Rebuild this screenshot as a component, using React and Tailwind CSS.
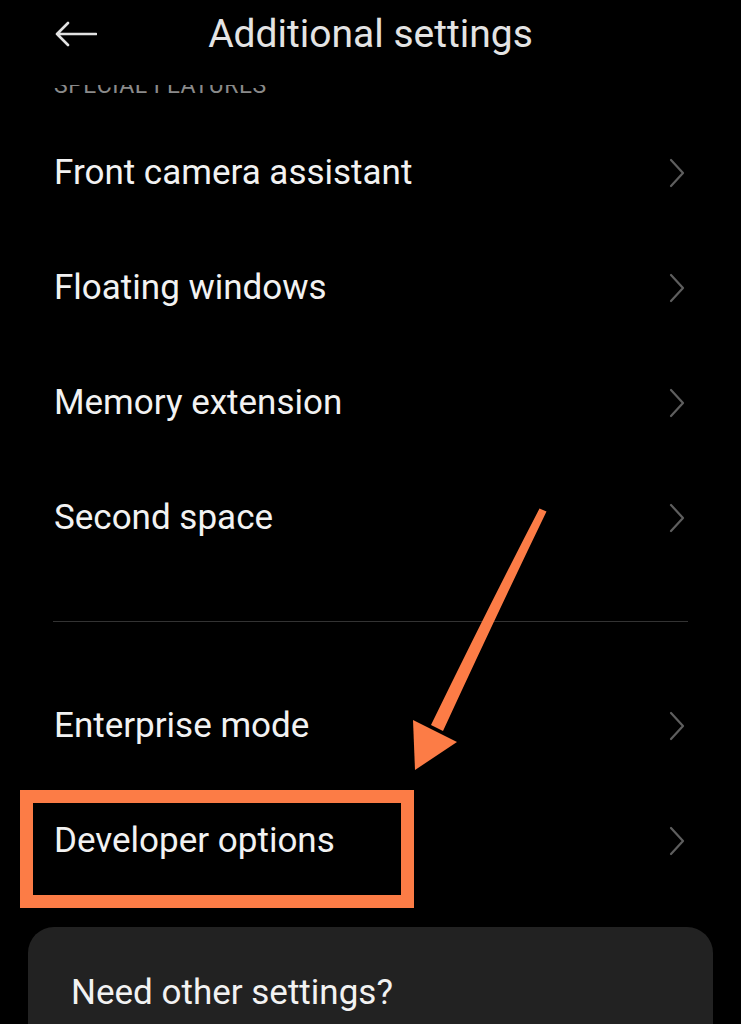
import React from "react";

const Chevron = () => (
  <svg width="20" height="32" viewBox="0 0 20 32" fill="none">
    <path d="M4 3 L16 16 L4 29" stroke="#5e5e5e" strokeWidth="2.2" strokeLinecap="round" strokeLinejoin="round" />
  </svg>
);

const Row = ({ label }) => (
  <div className="flex h-[115px] items-center justify-between pl-[54px] pr-[54px]">
    <span className="text-[35px] leading-[42px] text-[#f2f2f2]">{label}</span>
    <Chevron />
  </div>
);

export default function App() {
  return (
    <div className="relative h-[1024px] w-[741px] overflow-hidden bg-black" style={{ fontFamily: "Roboto, 'Noto Sans', sans-serif" }}>
      <div className="relative z-10 h-[85px] bg-black">
        <div className="absolute left-[55px] top-[21px]">
          <svg width="42" height="26" viewBox="0 0 42 26" fill="none">
            <path d="M2 13 H41 M13 2 L2 13 L13 24" stroke="#e2e2e2" strokeWidth="2.6" strokeLinecap="round" strokeLinejoin="round" />
          </svg>
        </div>
        <div className="w-full pt-[11px] text-center text-[39px] leading-[46px] text-[#e4e4e4]">Additional settings</div>
      </div>
      <div className="h-[30px] overflow-hidden">
        <div className="-mt-[11px] pl-[54px] text-[23px] leading-[23px] tracking-[0.5px] text-[#8a8a8a]">SPECIAL FEATURES</div>
      </div>
      <Row label="Front camera assistant" />
      <Row label="Floating windows" />
      <Row label="Memory extension" />
      <Row label="Second space" />
      <div className="mx-[53px] mt-[46px] h-px bg-[#333333]" />
      <div className="mt-[46px]">
        <Row label="Enterprise mode" />
        <Row label="Developer options" />
      </div>
      <div className="mx-[28px] mt-[29px] h-[200px] rounded-[26px] bg-[#222222] pl-[43px] pt-[45px]">
        <span className="text-[35px] leading-[42px] text-[#f2f2f2]">Need other settings?</span>
      </div>
      <div className="pointer-events-none absolute left-[20px] top-[790px] h-[118px] w-[394px] border-[13px] border-[#fc7c46]" />
      <svg className="pointer-events-none absolute left-0 top-0" width="741" height="1024" viewBox="0 0 741 1024">
        <path d="M546.5 511.5 Q 498 612 443 731 L 431 725 Q 488 608 539.5 508.5 Z" fill="#fc7c46" />
        <path d="M415 770 L413 720 L457 742 Z" fill="#fc7c46" />
      </svg>
    </div>
  );
}
